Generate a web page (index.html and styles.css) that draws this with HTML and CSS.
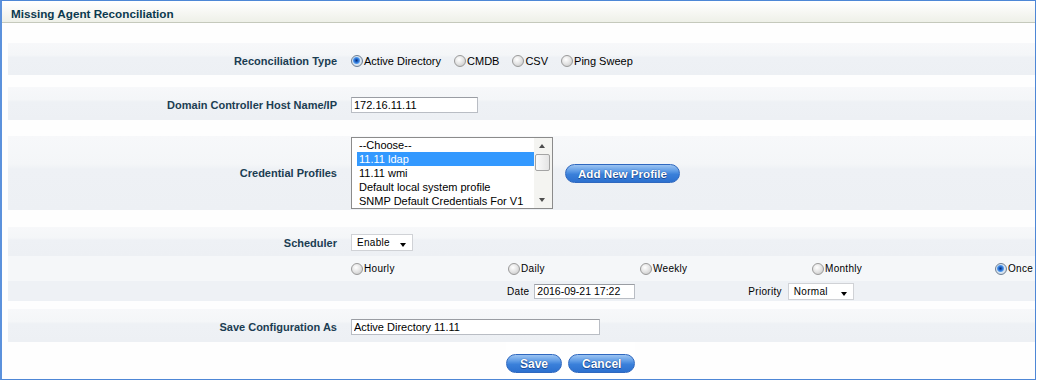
FILE: index.html
```html
<!DOCTYPE html>
<html lang="en">
<head>
    <meta charset="UTF-8">
    <title>Missing Agent Reconciliation</title>
    <link rel="stylesheet" href="styles.css">
</head>
<body>
    <div class="panel">
        <div class="panel-title">Missing Agent Reconciliation</div>

        <div class="panel-body">
            <div class="form-row row-type">
                <div class="form-label">Reconciliation Type</div>
                <div class="form-field radios">
                    <label class="opt"><input type="radio" name="rtype" checked>Active Directory</label>
                    <label class="opt"><input type="radio" name="rtype">CMDB</label>
                    <label class="opt"><input type="radio" name="rtype">CSV</label>
                    <label class="opt"><input type="radio" name="rtype">Ping Sweep</label>
                </div>
            </div>

            <div class="form-row row-host">
                <div class="form-label">Domain Controller Host Name/IP</div>
                <div class="form-field">
                    <input type="text" class="text host" value="172.16.11.11">
                </div>
            </div>

            <div class="form-row row-cred">
                <div class="form-label">Credential Profiles</div>
                <div class="form-field">
                    <div class="listbox">
                        <ul class="listbox-items">
                            <li>--Choose--</li>
                            <li class="selected">11.11 ldap</li>
                            <li>11.11 wmi</li>
                            <li>Default local system profile</li>
                            <li>SNMP Default Credentials For V1</li>
                        </ul>
                        <div class="listbox-scroll">
                            <span class="arrow up"></span>
                            <span class="thumb"></span>
                            <span class="arrow down"></span>
                        </div>
                    </div>
                    <button class="pill add">Add New Profile</button>
                </div>
            </div>

            <div class="sched">
                <div class="form-row row-sched">
                    <div class="form-label">Scheduler</div>
                    <div class="form-field">
                        <span class="dropdown enable">Enable</span>
                    </div>
                </div>
                <div class="sched-freq">
                    <label class="opt small"><input type="radio" name="freq">Hourly</label>
                    <label class="opt small"><input type="radio" name="freq">Daily</label>
                    <label class="opt small"><input type="radio" name="freq">Weekly</label>
                    <label class="opt small"><input type="radio" name="freq">Monthly</label>
                    <label class="opt small"><input type="radio" name="freq" checked>Once</label>
                </div>
                <div class="sched-when">
                    <span class="small">Date</span>
                    <input type="text" class="text date" value="2016-09-21 17:22">
                    <span class="small priority">Priority</span>
                    <span class="dropdown normal">Normal</span>
                </div>
            </div>

            <div class="form-row row-save">
                <div class="form-label">Save Configuration As</div>
                <div class="form-field">
                    <input type="text" class="text config" value="Active Directory 11.11">
                </div>
            </div>

            <div class="actions">
                <div class="actions-box">
                    <button class="pill">Save</button>
                    <button class="pill">Cancel</button>
                </div>
            </div>
        </div>
    </div>
</body>
</html>
```

FILE: styles.css
```css
body {
    margin: 0;
    font-family: 'Liberation Sans', Arial, sans-serif;
    font-size: 11px;
    color: #000;
    background: #fff;
}

.panel {
    width: 1036px;
    height: 380px;
    box-sizing: border-box;
    border: 1px solid #4e87d6;
    border-left: 2px solid #5b91dc;
    background: #fefefe;
}

.panel-title {
    height: 22px;
    box-sizing: border-box;
    padding: 2px 0 0 9px;
    line-height: 20px;
    font-size: 11.7px;
    font-weight: bold;
    color: #0c3a4f;
    background: linear-gradient(to bottom, #ffffff 0%, #fafaf8 30%, #eef0e8 100%);
    border-top: 1px solid #fff;
    border-bottom: 1px solid #c5c9bc;
}

.panel-body {
    padding: 20px 0 0 6px;
}

.form-row {
    display: flex;
    align-items: center;
    box-sizing: border-box;
    padding-top: 2px;
    background: linear-gradient(to bottom, #f7f8fa 0%, #f4f6f8 38%, #eef1f5 45%, #edf0f4 100%);
}

.form-label {
    width: 342px;
    box-sizing: border-box;
    padding-right: 13px;
    text-align: right;
    font-weight: bold;
    color: #1b3d52;
}

.form-field {
    display: flex;
    align-items: center;
}

.row-type {
    height: 32px;
    padding-top: 3px;
    margin-bottom: 12px;
}

.row-host {
    height: 33px;
    margin-bottom: 16px;
}

.row-cred {
    height: 74px;
    padding-top: 0;
    margin-bottom: 17px;
}

.row-save {
    height: 33px;
    padding-top: 3px;
}

/* radios */
.opt {
    display: inline-flex;
    align-items: center;
    white-space: nowrap;
}

.radios {
    gap: 12px;
}

.opt input {
    appearance: none;
    -webkit-appearance: none;
    width: 12px;
    height: 12px;
    margin: 0 1px 0 1px;
    border: 1px solid #9a9a9a;
    border-radius: 50%;
    box-sizing: border-box;
    background: radial-gradient(circle at 40% 35%, #ffffff 0%, #e6e6e6 45%, #c2c2c2 100%);
}

.opt input:checked {
    border-color: #6d7f94;
    background: radial-gradient(circle at 45% 45%, #0a2f6e 0, #1c5fc4 1.5px, #4f98ec 3px, #d8e6f4 4px, #cfcfcf 100%);
}

.small {
    font-size: 10px;
    letter-spacing: 0.3px;
}

/* text inputs */
.text {
    height: 16px;
    box-sizing: border-box;
    margin: 0 0 0 1px;
    padding: 0 2px;
    border: 1px solid #b9bdc4;
    border-top-color: #9a9da3;
    font-family: 'Liberation Sans', Arial, sans-serif;
    font-size: 11px;
    color: #000;
    background: #fff;
}

.host {
    width: 127px;
}

.config {
    width: 249px;
}

.date {
    width: 101px;
    height: 15px;
    margin-left: 5px;
    font-size: 10.5px;
}

/* list box */
.listbox {
    display: flex;
    width: 202px;
    height: 72px;
    margin-left: 1px;
    box-sizing: border-box;
    border: 1px solid #8b8b8b;
    background: #fff;
}

.listbox-items {
    flex: 1;
    list-style: none;
    margin: 0;
    padding: 0 0 0 5px;
    line-height: 14px;
}

.listbox-items li {
    padding-left: 2px;
    white-space: nowrap;
}

.listbox-items li.selected {
    background: #3399ff;
    color: #fff;
}

.listbox-scroll {
    position: relative;
    width: 18px;
    background: #f4f4f1;
}

.listbox-scroll .arrow {
    position: absolute;
    left: 5px;
    width: 0;
    height: 0;
    border-left: 3.5px solid transparent;
    border-right: 3.5px solid transparent;
}

.listbox-scroll .up {
    top: 6px;
    border-bottom: 4px solid #4d4d4d;
}

.listbox-scroll .down {
    bottom: 6px;
    border-top: 4px solid #4d4d4d;
}

.listbox-scroll .thumb {
    position: absolute;
    top: 16px;
    left: 1px;
    width: 15px;
    height: 17px;
    box-sizing: border-box;
    border: 1px solid #a4a4a4;
    border-radius: 2px;
    background: linear-gradient(to right, #fbfbfb, #e4e4e4);
}

/* buttons */
.pill {
    height: 19px;
    padding: 0 13px;
    border: 1px solid #2f68bf;
    border-radius: 10px;
    font-family: 'Liberation Sans', Arial, sans-serif;
    font-size: 12px;
    font-weight: bold;
    color: #fff;
    text-shadow: 0 0 1px #0e3a80, 0 1px 0 #1c4c9a;
    background: linear-gradient(to bottom, #9cc4f2 0%, #5f9ce6 35%, #3a80da 55%, #2c70cf 100%);
    cursor: pointer;
}

.add {
    margin-left: 12px;
    padding: 0 12px;
    font-size: 11.6px;
}

/* scheduler */
.sched {
    margin-bottom: 8px;
}

.row-sched {
    height: 29px;
}

.dropdown {
    position: relative;
    display: inline-block;
    height: 17px;
    box-sizing: border-box;
    padding: 1px 0 0 5px;
    border: 1px solid #d0d2d6;
    background: #fff;
    font-size: 10px;
    letter-spacing: 0.3px;
    line-height: 14px;
}

.dropdown::after {
    content: "";
    position: absolute;
    right: 6px;
    top: 8px;
    border-left: 3.5px solid transparent;
    border-right: 3.5px solid transparent;
    border-top: 4px solid #000;
}

.enable {
    width: 62px;
    margin-left: 1px;
}

.normal {
    width: 66px;
    margin-left: 6px;
}

.sched-freq {
    display: grid;
    grid-template-columns: 157px 132px 172px 183px auto;
    align-items: center;
    height: 25px;
    padding-left: 342px;
    background: #f5f7f9;
}

.sched-when {
    display: flex;
    align-items: center;
    height: 20px;
    padding-left: 499px;
    background: #eef1f5;
}

.priority {
    margin-left: 113px;
}

.actions {
    height: 35px;
    padding-left: 498px;
}

.actions-box {
    display: inline-flex;
    align-items: center;
    gap: 6px;
    height: 35px;
    padding-top: 8px;
    box-sizing: border-box;
    background: #fff;
}
```
